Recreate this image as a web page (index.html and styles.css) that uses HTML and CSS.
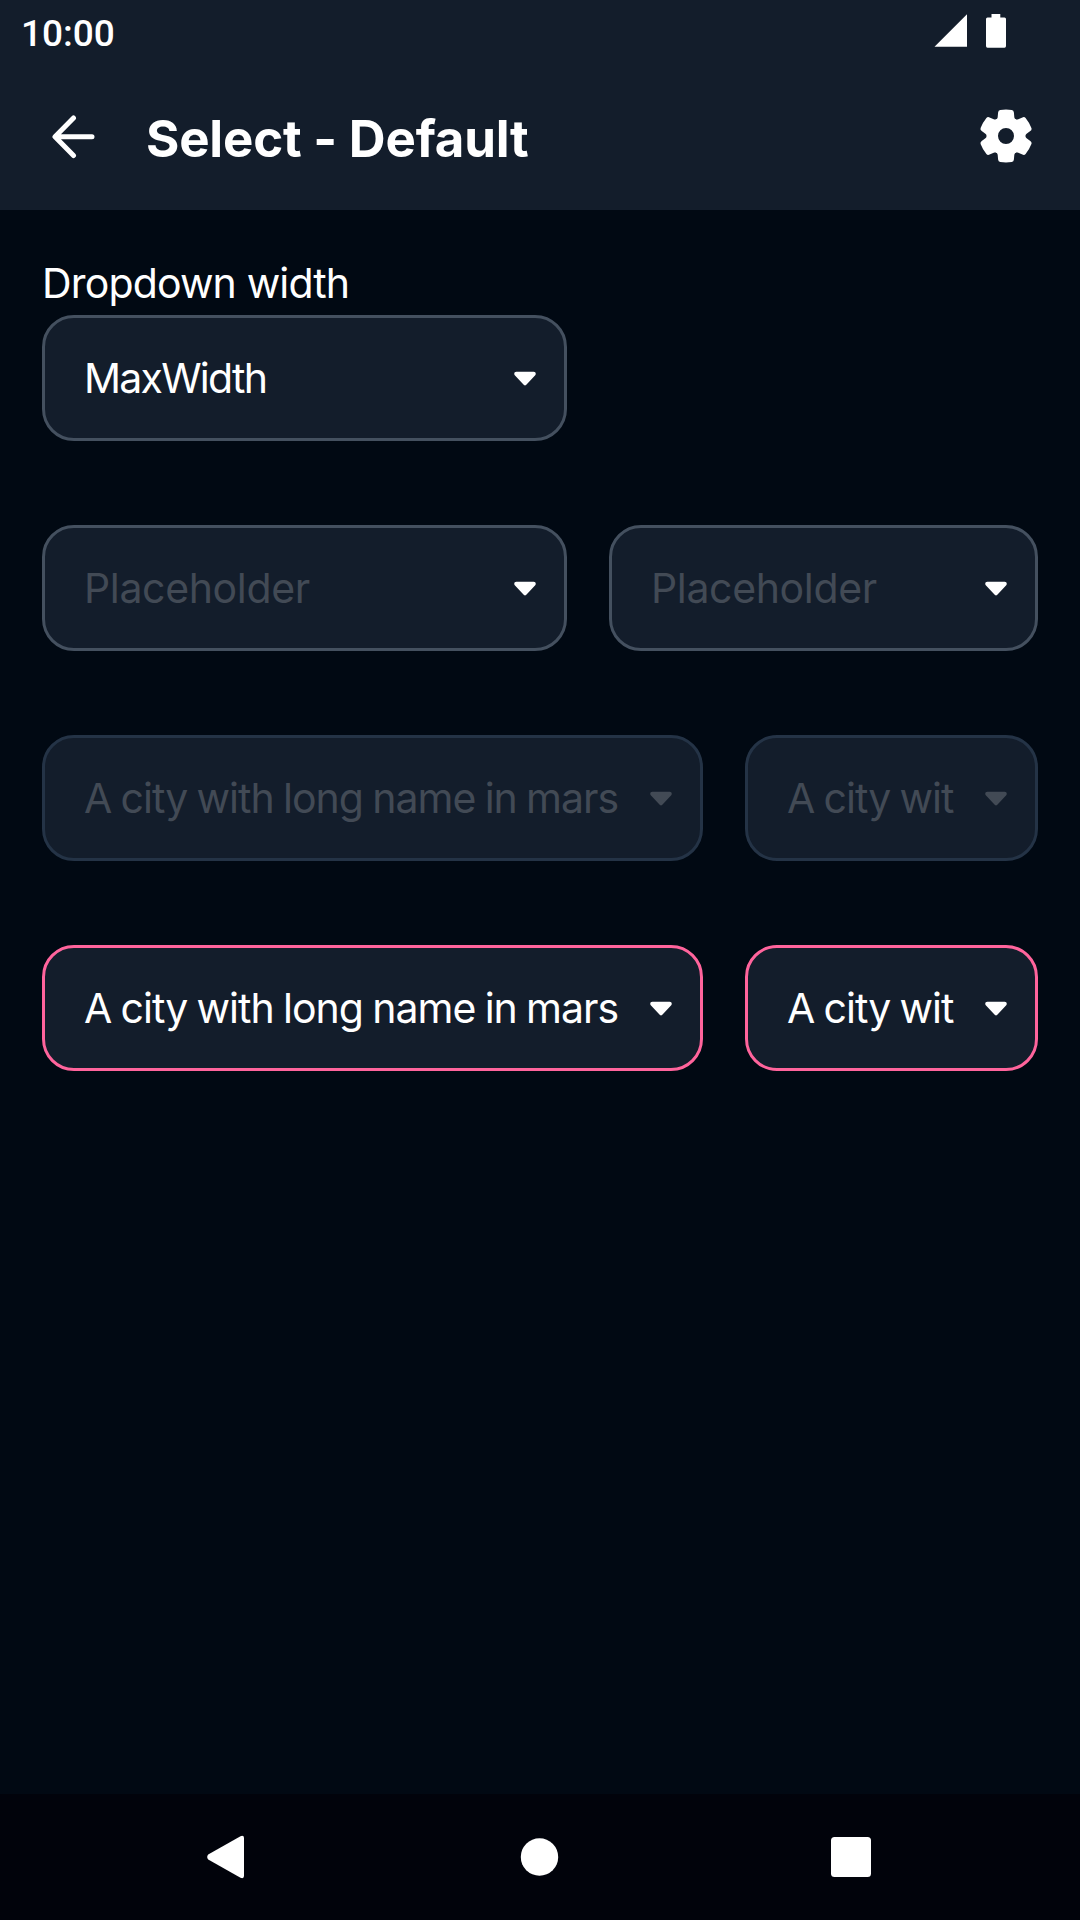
FILE: index.html
```html
<!DOCTYPE html>
<html lang="en">
<head>
<meta charset="utf-8">
<title>Select - Default</title>
<link rel="stylesheet" href="styles.css">
</head>
<body>
<svg width="0" height="0" class="defs">
  <symbol id="caret" viewBox="0 0 22 15"><path d="M2.4 .7H19.6C21.8 .7 22.4 3 21 4.5L13 13C11.8 14.9 10.2 14.9 9 13L1 4.5C-.4 3 .2 .7 2.4 .7Z" fill="currentColor"/></symbol>
</svg>
<header class="header">
  <div class="status">
    <span class="time">10:00</span>
    <svg class="status-icons" width="74" height="36" viewBox="0 0 74 36" fill="#fff">
      <path d="M0.5 33.8H33V1.2Z"/>
      <path d="M57.5 1H66.300V4.500H70.500Q72 4.500 72 6V33Q72 34.700 70.500 34.700H53.500Q52 34.700 52 33V6Q52 4.500 53.500 4.500H57.500Z"/>
    </svg>
  </div>
  <div class="appbar">
    <svg class="back" width="44" height="46" viewBox="0 0 44 46" fill="none" stroke="#fff" stroke-width="5" stroke-linecap="round" stroke-linejoin="round"><path d="M40 22.700H4M21.500 4L3 22.700L21.500 41.500"/></svg>
    <h1 class="title">Select - Default</h1>
    <svg class="gear" width="54" height="54" viewBox="-27 -27 54 54">
      <defs><path id="tooth" d="M-12 -15Q-8.500 -16 -8.300 -19L-7.900 -23.500Q-7.700 -25.600 -5.800 -26Q0 -26.900 5.800 -26Q7.700 -25.600 7.900 -23.500L8.300 -19Q8.500 -16 12 -15Z"/></defs>
      <g fill="#fff">
        <path fill-rule="evenodd" d="M0 -19.500A19.500 19.500 0 1 1 0 19.500A19.500 19.500 0 1 1 0 -19.500ZM0 -8A8 8 0 1 0 0 8A8 8 0 1 0 0 -8Z"/>
        <use href="#tooth"/><use href="#tooth" transform="rotate(60)"/><use href="#tooth" transform="rotate(120)"/><use href="#tooth" transform="rotate(180)"/><use href="#tooth" transform="rotate(240)"/><use href="#tooth" transform="rotate(300)"/>
      </g>
    </svg>
  </div>
</header>
<main class="content">
  <div class="label">Dropdown width</div>
  <div class="row">
    <div class="select half"><span class="value maxwidth">MaxWidth</span><svg class="caret"><use href="#caret"/></svg></div>
  </div>
  <div class="row">
    <div class="select half placeholder"><span class="value hint">Placeholder</span><svg class="caret"><use href="#caret"/></svg></div>
    <div class="select fill placeholder"><span class="value hint">Placeholder</span><svg class="caret"><use href="#caret"/></svg></div>
  </div>
  <div class="row">
    <div class="select long disabled"><span class="value city">A city with long name in mars</span><svg class="caret"><use href="#caret"/></svg></div>
    <div class="select fill disabled"><span class="value city">A city wit</span><svg class="caret"><use href="#caret"/></svg></div>
  </div>
  <div class="row">
    <div class="select long error"><span class="value city">A city with long name in mars</span><svg class="caret"><use href="#caret"/></svg></div>
    <div class="select fill error"><span class="value city">A city wit</span><svg class="caret"><use href="#caret"/></svg></div>
  </div>
</main>
<nav class="nav">
  <svg width="38" height="44" viewBox="0 0 38 44" fill="#fff"><path d="M1.200 19.500L33.500 1.200Q37 0 37 3V41Q37 44 33.500 42.800L1.200 24.500Q-.8 22 1.200 19.500Z"/></svg>
  <svg width="38" height="38" viewBox="0 0 38 38" fill="#fff"><circle cx="19" cy="19" r="18.700"/></svg>
  <svg width="40" height="40" viewBox="0 0 40 40" fill="#fff"><rect width="40" height="40" rx="3.500"/></svg>
</nav>
</body>
</html>
```
FILE: styles.css
```css
* { box-sizing: border-box; }
body {
  margin: 0;
  width: 1080px;
  height: 1920px;
  display: flex;
  flex-direction: column;
  background: #010913;
  color: #fff;
  font-family: Inter, "Liberation Sans", sans-serif;
  overflow: hidden;
}
svg { display: block; flex: none; }
.defs { position: absolute; }
.header { height: 210px; background: #131d2b; }
.status {
  height: 63px;
  padding: 13px 72px 0 21px;
  display: flex;
  justify-content: space-between;
  align-items: flex-start;
}
.time {
  padding-top: 1px;
  font: 500 37px/40px Roboto, sans-serif;
}
.appbar {
  height: 147px;
  padding: 0 47px 0 52px;
  display: flex;
  align-items: flex-start;
}
.back { margin-top: 51px; }
.title {
  margin: 46px auto 0 50px;
  font-size: 51px;
  line-height: 60px;
  font-weight: 650;
  letter-spacing: -.2px;
  white-space: pre;
}
.gear { margin-top: 46px; }
.content {
  flex: 1;
  padding: 52px 42px 0;
}
.label {
  height: 53px;
  font-size: 41px;
  line-height: 42px;
  letter-spacing: -.85px;
}
.row {
  display: flex;
  gap: 42px;
  margin-bottom: 84px;
}
.select {
  height: 126px;
  padding: 0 28px 0 39px;
  border: 3px solid #44505f;
  border-radius: 32px;
  background: #131d2b;
  display: flex;
  align-items: center;
  justify-content: space-between;
}
.half { width: 525px; }
.long { width: 661px; }
.fill { flex: 1; }
.value {
  font-size: 41px;
  line-height: 50px;
  white-space: nowrap;
}
.maxwidth { letter-spacing: -1.75px; }
.hint { letter-spacing: -.35px; }
.city { letter-spacing: -1px; word-spacing: -1.2px; }
.caret { width: 22px; height: 15px; }
.placeholder .value { color: #424a55; }
.disabled { border-color: #243346; color: #424a55; }
.error { border-color: #ff649c; }
.nav {
  height: 126px;
  padding: 0 209px 0 207px;
  background: #01030b;
  display: flex;
  align-items: center;
  justify-content: space-between;
}
.nav circle { transform: translateX(1.500px); }
.nav svg { overflow: visible; }
```
